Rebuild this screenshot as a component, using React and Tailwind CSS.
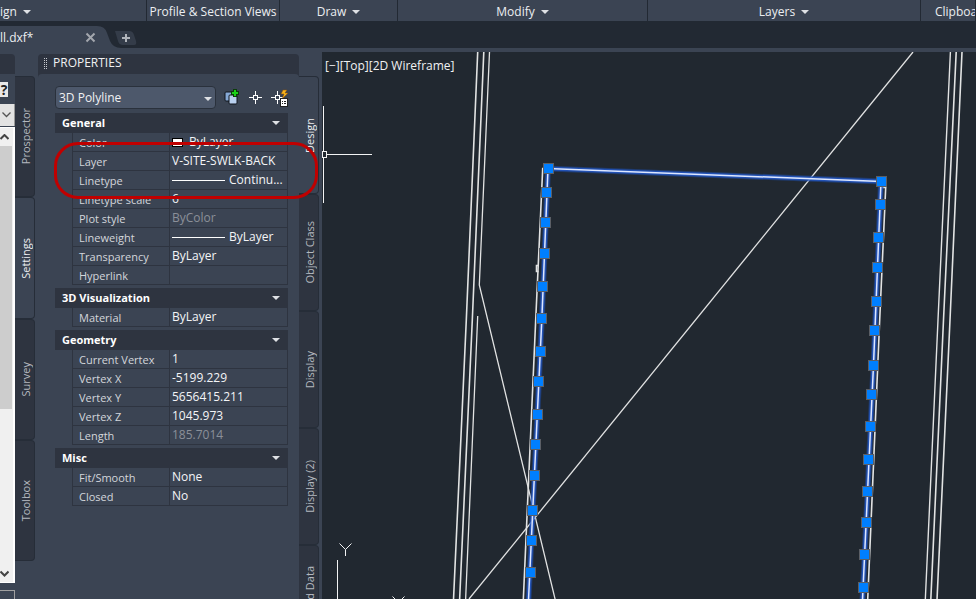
import React from "react";

const Caret = ({ className = "" }) => (
  <svg width="8" height="4" viewBox="0 0 8 4" className={className} aria-hidden="true">
    <path d="M0 0H8L4 4Z" fill="#dfe1e5" />
  </svg>
);

function RibbonPanel({ label, caret, className }) {
  return (
    <button className={`flex items-center gap-1.5 overflow-hidden whitespace-nowrap border-r border-[#222933] pt-[3px] leading-[18px] ${className}`}>
      {label}
      {caret && <Caret />}
    </button>
  );
}

function Ribbon() {
  return (
    <div className="flex h-[21px] shrink-0 bg-[#3b4453] text-[#eceef1]">
      <RibbonPanel label="ign" caret className="w-[147px]" />
      <RibbonPanel label="Profile & Section Views" className="w-[133px] justify-center" />
      <RibbonPanel label="Draw" caret className="w-[118px] justify-center" />
      <RibbonPanel label="Modify" caret className="w-[250px] justify-center" />
      <RibbonPanel label="Layers" caret className="w-[273px] justify-center" />
      <RibbonPanel label="Clipboard" className="min-w-0 flex-1 pl-3.5" />
    </div>
  );
}

function FileTabs() {
  return (
    <div className="relative flex h-[27px] shrink-0 items-end bg-[#222933]">
      <svg width="140" height="27" className="absolute left-0 top-0" aria-hidden="true">
        <path d="M0 5H97Q105 5 107 12L110 20Q113 27 121 27H0Z" fill="#3b4453" />
        <path d="M115 10H129Q133 10 134 14L136 20Q137 24 134 24H123Q119 24 118 20Z" fill="#343c49" />
      </svg>
      <div className="relative flex h-[22px] w-[112px] items-center">
        <span className="w-[85px] pt-0.5 text-[#eceef1]">ll.dxf*</span>
        <button aria-label="Close tab">
          <svg width="11" height="11" viewBox="0 0 11 11">
            <path d="M1.5 1.5L9.5 9.5M9.5 1.5L1.5 9.5" stroke="#a3a7ae" strokeWidth="2" />
          </svg>
        </button>
      </div>
      <button aria-label="New tab" className="relative mb-1.5 ml-2.5">
        <svg width="8" height="8" viewBox="0 0 8 8">
          <path d="M4 0V8M0 4H8" stroke="#b0b4ba" strokeWidth="2" />
        </svg>
      </button>
    </div>
  );
}

function SideTab({ label, active, className }) {
  return (
    <button
      className={`flex w-5 shrink-0 items-center justify-center rounded-r border-b border-r border-t border-[#262d38] pl-0.5 text-[11px] ${
        active ? "bg-[#3b4453] text-[#eceef1]" : "bg-[#2e3440] text-[#b4b8bf]"
      } ${className}`}
    >
      <span className="rotate-180 whitespace-nowrap [writing-mode:vertical-rl]">{label}</span>
    </button>
  );
}

function Toolspace() {
  return (
    <div className="flex w-[35px] shrink-0 pt-1.5">
      <div className="flex w-[15px] shrink-0 flex-col">
        <div className="h-5 rounded-tr bg-[#2e3440]" />
        <button className="mt-2 h-[15px] w-2 bg-[#e8e8e8] text-[14px] font-bold leading-[15px] text-[#222]">
          ?
        </button>
        <button aria-label="Open list" className="mt-[7px] flex h-[22px] items-center border-r border-[#9a9a9a] bg-[#e3e3e3] pl-0.5">
          <svg width="9" height="6" viewBox="0 0 9 6">
            <path d="M.5 .5L4.5 4.5L8.5 .5" stroke="#555" strokeWidth="1.3" fill="none" />
          </svg>
        </button>
        <div className="mt-px flex h-[456px] flex-col border-y border-r-2 border-white bg-[#f0f0f0] pr-px">
          <button aria-label="Scroll up" className="flex h-[18px] items-center">
            <svg width="9" height="6" viewBox="0 0 9 6">
              <path d="M.5 5L4.5 1L8.5 5" stroke="#444" strokeWidth="2" fill="none" />
            </svg>
          </button>
          <div className="h-[263px] bg-[#cdcdcd]" />
          <button aria-label="Scroll down" className="mb-1 mt-auto flex">
            <svg width="9" height="8" viewBox="0 0 9 8">
              <path d="M.5 1.5L4.5 5.5L8.5 1.5" stroke="#444" strokeWidth="2" fill="none" />
            </svg>
          </button>
        </div>
        <div className="mt-[7px] flex-1 border-r border-t border-[#a0a0a0]" />
      </div>
      <div className="flex flex-col pt-[22px]">
        <SideTab label="Prospector" className="h-[121px]" />
        <SideTab label="Settings" active className="h-[122px]" />
        <SideTab label="Survey" className="h-[121px]" />
        <SideTab label="Toolbox" className="h-[121px]" />
      </div>
    </div>
  );
}

const Sample = () => <span className="mr-1 inline-block h-px w-[53px] bg-white align-middle" />;

const sections = [
  {
    title: "General",
    rows: [
      ["Color", <><span className="mr-1.5 inline-block h-[9px] w-[11px] border border-black bg-white align-[-1px]" />ByLayer</>],
      ["Layer", "V-SITE-SWLK-BACK"],
      ["Linetype", <><Sample />Continu...</>],
      ["Linetype scale", "6"],
      ["Plot style", "ByColor", true],
      ["Lineweight", <><Sample />ByLayer</>],
      ["Transparency", "ByLayer"],
      ["Hyperlink", ""],
    ],
  },
  { title: "3D Visualization", rows: [["Material", "ByLayer"]] },
  {
    title: "Geometry",
    rows: [
      ["Current Vertex", "1"],
      ["Vertex X", "-5199.229"],
      ["Vertex Y", "5656415.211"],
      ["Vertex Z", "1045.973"],
      ["Length", "185.7014", true],
    ],
  },
  { title: "Misc", rows: [["Fit/Smooth", "None"], ["Closed", "No"]] },
];

function Section({ title, rows }) {
  return (
    <section>
      <button className="flex h-5 w-full items-center justify-between bg-[#2e3440] pl-[7px] pr-2 text-[11px] font-bold text-white">
        {title}
        <Caret />
      </button>
      <div className="pl-[17px]">
        <table className="w-full table-fixed border-separate border-spacing-0 border-r border-[#2e3440]">
          <tbody>
            {rows.map(([name, value, dim]) => (
              <tr key={name} className="h-[19px]">
                <th scope="row" className="w-[97px] whitespace-nowrap border-b border-l border-[#2e3440] p-0 pl-1.5 pt-0.5 text-left text-[11px] font-normal leading-4 text-[#d3d6db]">
                  {name}
                </th>
                <td className={`whitespace-nowrap border-b border-l border-[#2e3440] p-0 pl-0.5 leading-[18px] ${dim ? "text-[#8b9099]" : "text-[#f4f5f7]"}`}>
                  {value}
                </td>
              </tr>
            ))}
          </tbody>
        </table>
      </div>
    </section>
  );
}

function Tools() {
  return (
    <div className="flex items-center gap-[9px] pl-2">
      <button aria-label="Toggle PICKADD">
        <svg width="16" height="18" viewBox="0 0 16 18">
          <rect x="1" y="3" width="8" height="9" rx="1" fill="#86a9d6" stroke="#10151c" />
          <rect x="5" y="6" width="8" height="9" rx="1" fill="#b9d0ef" stroke="#10151c" />
          <path d="M11 0V8M7 4H15" stroke="#0b3d0b" strokeWidth="4" />
          <path d="M11 1V7M8 4H14" stroke="#19d119" strokeWidth="2" />
        </svg>
      </button>
      <button aria-label="Select objects">
        <svg width="13" height="14" viewBox="0 0 13 14" fill="none" stroke="#fff">
          <path d="M6.500 0V4M6.500 9V13M0 6.500H4M9 6.500H13" />
          <rect x="4.500" y="4.500" width="4" height="4" />
        </svg>
      </button>
      <button aria-label="Quick select">
        <svg width="17" height="18" viewBox="0 0 17 18" fill="none">
          <path d="M6.500 2V6M6.500 11V15M0 8.500H4M9 8.500H12" stroke="#fff" />
          <rect x="4.500" y="6.500" width="4" height="4" stroke="#fff" />
          <path d="M12 1H16L14 4H17L11 10L13 5H10Z" fill="#f8b51e" stroke="#8a4d08" strokeWidth=".5" />
          <rect x="9.500" y="9.500" width="7" height="8" fill="#fff" stroke="#222" />
          <path d="M11 12.500H12M13 12.500H15M11 14.500H12M13 14.500H15" stroke="#222" />
        </svg>
      </button>
    </div>
  );
}

function Properties() {
  return (
    <div className="ml-[3px] w-[261px] shrink-0 pt-1.5">
      <div className="rounded-t bg-[#2e3440]">
        <h2 className="flex h-5 items-center gap-[5px] pb-0.5 pl-1.5 text-[#f0f1f3]">
          <svg width="4" height="11" viewBox="0 0 4 11" aria-hidden="true">
            <path d="M.5 0V11M2.5 0V11" stroke="#c9ccd1" strokeDasharray="1 1" />
          </svg>
          PROPERTIES
        </h2>
        <div className="h-3 rounded-t bg-[#3b4453]" />
      </div>
      <div className="pl-[17px] pr-[11px]">
        <div className="flex items-center">
          <div className="relative">
            <select aria-label="Object type" className="block h-[23px] w-[161px] appearance-none rounded-sm border border-[#2a313c] bg-[#4d586b] pl-[3px] text-[#f0f1f3]">
              <option>3D Polyline</option>
            </select>
            <Caret className="pointer-events-none absolute right-1 top-[11px]" />
          </div>
          <Tools />
        </div>
        <div className="mt-1 flex flex-col gap-[3px]">
          {sections.map((s) => (
            <Section key={s.title} {...s} />
          ))}
        </div>
      </div>
    </div>
  );
}

const leftGrips = [
  [548, 168], [546, 192], [545, 222], [544, 253], [542, 286], [541, 318], [540, 351],
  [538, 381], [537, 414], [535, 444], [534, 475], [532, 510], [531, 540], [530, 572],
];
const rightGrips = [
  [881, 181], [880, 204], [878, 237], [877, 267], [876, 301], [874, 330], [873, 365],
  [871, 394], [870, 426], [868, 459], [867, 491], [866, 522], [864, 554], [863, 587],
];
const polyline = "M528.5 600L541.8 320L548 168.5L881 181.5L873.5 365L862.5 600";

function Drawing() {
  return (
    <main className="relative min-w-0 flex-1 overflow-hidden bg-[#212830]">
      <svg className="absolute inset-0 h-full w-full" viewBox="322 52 654 547" preserveAspectRatio="xMinYMin slice" fill="none" aria-label="Site plan">
        <g stroke="#e2e3e3" strokeWidth="1.6">
          <path d="M477.7 52L466.3 320L453.5 600M483.8 52L472.3 320L459.6 600" />
          <path d="M489.5 52L479.3 285L555.3 600M477.7 316L465.6 600" strokeWidth="1.3" />
          <path d="M913 52L469 599" strokeWidth="1.3" />
          <path d="M950.4 52L938 320L925.3 600" strokeWidth="1.4" />
          <path d="M956.2 52L943.5 320L930.8 600M962 52L950 320L937 600" />
          <path d="M547 168.5H542.7L535.7 320L523.3 600M881 187.5H885.7L879.7 320L867.7 600" />
          <path d="M538.5 265.5H536.5V271.5H538.5" />
        </g>
        <path d={polyline} stroke="#1d4fb4" strokeOpacity=".45" strokeWidth="6" />
        <path d={polyline} stroke="#2459c8" strokeOpacity=".8" strokeWidth="4" />
        <path d={polyline} stroke="#dde7ff" strokeWidth="1.5" />
        {[...leftGrips, ...rightGrips].map(([x, y]) => (
          <rect key={`${x}-${y}`} x={x - 4.5} y={y - 4.5} width="10" height="10" fill="#007fff" stroke="#5b5f66" />
        ))}
        <g stroke="#f2f3f4">
          <path d="M323.5 106V151M323.5 158V203M327 154.5H372" />
          <rect x="322.5" y="151.5" width="4" height="6" />
          <path d="M337.5 560V600" />
          <path d="M339.5 543.5L345.5 549.5L351.5 543.5M345.5 549.5V556M392.5 596.5L398.5 602.5L404.5 596.5" />
        </g>
      </svg>
      <p className="relative pl-[3px] pt-[5px] leading-[18px] text-[#f0f1f3]">[−][Top][2D Wireframe]</p>
    </main>
  );
}

export default function App() {
  return (
    <div className="relative flex h-screen flex-col overflow-hidden bg-[#3b4453] font-['Open_Sans',sans-serif] text-[12px] leading-[18px]">
      <Ribbon />
      <FileTabs />
      <div className="flex min-h-0 flex-1">
        <Toolspace />
        <Properties />
        <div className="mr-[3px] flex flex-col overflow-hidden pt-7">
          <SideTab label="Design" active className="h-[118px]" />
          <SideTab label="Object Class" className="h-[117px]" />
          <SideTab label="Display" className="h-[117px]" />
          <SideTab label="Display (2)" className="h-[117px]" />
          <SideTab label="Extended Data" className="h-[117px]" />
        </div>
        <div className="flex min-w-0 flex-1 pt-1">
          <Drawing />
        </div>
      </div>
      <div className="pointer-events-none absolute left-[54px] top-[142px] h-[57px] w-[264px] rounded-[24px] border-[3px] border-[#c00000]" />
    </div>
  );
}
